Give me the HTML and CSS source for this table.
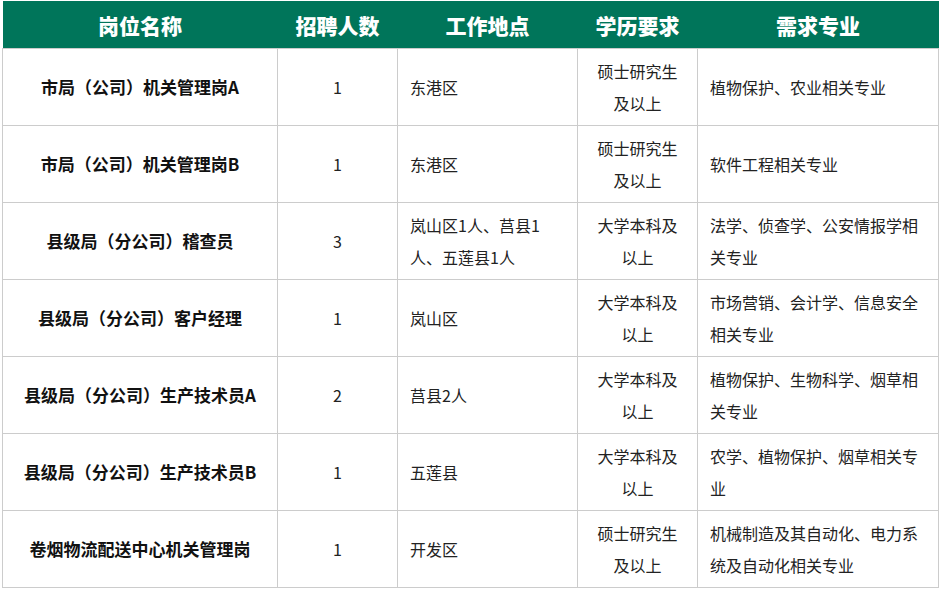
FILE: index.html
```html
<!DOCTYPE html>
<html lang="zh-CN">
<head>
<meta charset="utf-8">
<title>招聘岗位</title>
<link rel="stylesheet" href="styles.css">
</head>
<body>
<table class="jobs">
  <colgroup>
    <col class="c-name">
    <col class="c-num">
    <col class="c-loc">
    <col class="c-edu">
    <col class="c-major">
  </colgroup>
  <thead>
    <tr>
      <th>岗位名称</th>
      <th>招聘人数</th>
      <th>工作地点</th>
      <th>学历要求</th>
      <th>需求专业</th>
    </tr>
  </thead>
  <tbody>
    <tr>
      <td class="name">市局（公司）机关管理岗A</td>
      <td class="num">1</td>
      <td>东港区</td>
      <td class="edu">硕士研究生<br>及以上</td>
      <td>植物保护、农业相关专业</td>
    </tr>
    <tr>
      <td class="name">市局（公司）机关管理岗B</td>
      <td class="num">1</td>
      <td>东港区</td>
      <td class="edu">硕士研究生<br>及以上</td>
      <td>软件工程相关专业</td>
    </tr>
    <tr>
      <td class="name">县级局（分公司）稽查员</td>
      <td class="num">3</td>
      <td>岚山区1人、莒县1<br>人、五莲县1人</td>
      <td class="edu">大学本科及<br>以上</td>
      <td>法学、侦查学、公安情报学相<br>关专业</td>
    </tr>
    <tr>
      <td class="name">县级局（分公司）客户经理</td>
      <td class="num">1</td>
      <td>岚山区</td>
      <td class="edu">大学本科及<br>以上</td>
      <td>市场营销、会计学、信息安全<br>相关专业</td>
    </tr>
    <tr>
      <td class="name">县级局（分公司）生产技术员A</td>
      <td class="num">2</td>
      <td>莒县2人</td>
      <td class="edu">大学本科及<br>以上</td>
      <td>植物保护、生物科学、烟草相<br>关专业</td>
    </tr>
    <tr>
      <td class="name">县级局（分公司）生产技术员B</td>
      <td class="num">1</td>
      <td>五莲县</td>
      <td class="edu">大学本科及<br>以上</td>
      <td>农学、植物保护、烟草相关专<br>业</td>
    </tr>
    <tr>
      <td class="name">卷烟物流配送中心机关管理岗</td>
      <td class="num">1</td>
      <td>开发区</td>
      <td class="edu">硕士研究生<br>及以上</td>
      <td>机械制造及其自动化、电力系<br>统及自动化相关专业</td>
    </tr>
  </tbody>
</table>
</body>
</html>
```

FILE: styles.css
```css
html, body {
  margin: 0;
  background: #ffffff;
}

body {
  padding: 1px 0 0 2px;
  font-family: "Microsoft YaHei", "Noto Sans CJK SC", "Noto Sans", sans-serif;
  color: #222222;
}

.jobs {
  border-collapse: collapse;
  table-layout: fixed;
  width: 936px;
}

.c-name { width: 275px; }
.c-num { width: 120px; }
.c-loc { width: 180px; }
.c-edu { width: 120px; }
.c-major { width: 241px; }

.jobs th {
  background: #00755a;
  color: #ffffff;
  font-size: 21px;
  font-weight: 900;
  height: 47px;
  padding: 0;
  border: none;
  text-align: center;
  vertical-align: middle;
  line-height: 24px;
}

.jobs td {
  border: 1px solid #cccccc;
  height: 77px;
  padding: 0 12px;
  font-size: 16px;
  line-height: 32px;
  text-align: left;
  vertical-align: middle;
  color: #222222;
  box-sizing: border-box;
}

.jobs td.name {
  text-align: center;
  font-size: 17px;
  font-weight: bold;
  color: #111111;
}

.jobs td.num,
.jobs td.edu {
  text-align: center;
}
```
